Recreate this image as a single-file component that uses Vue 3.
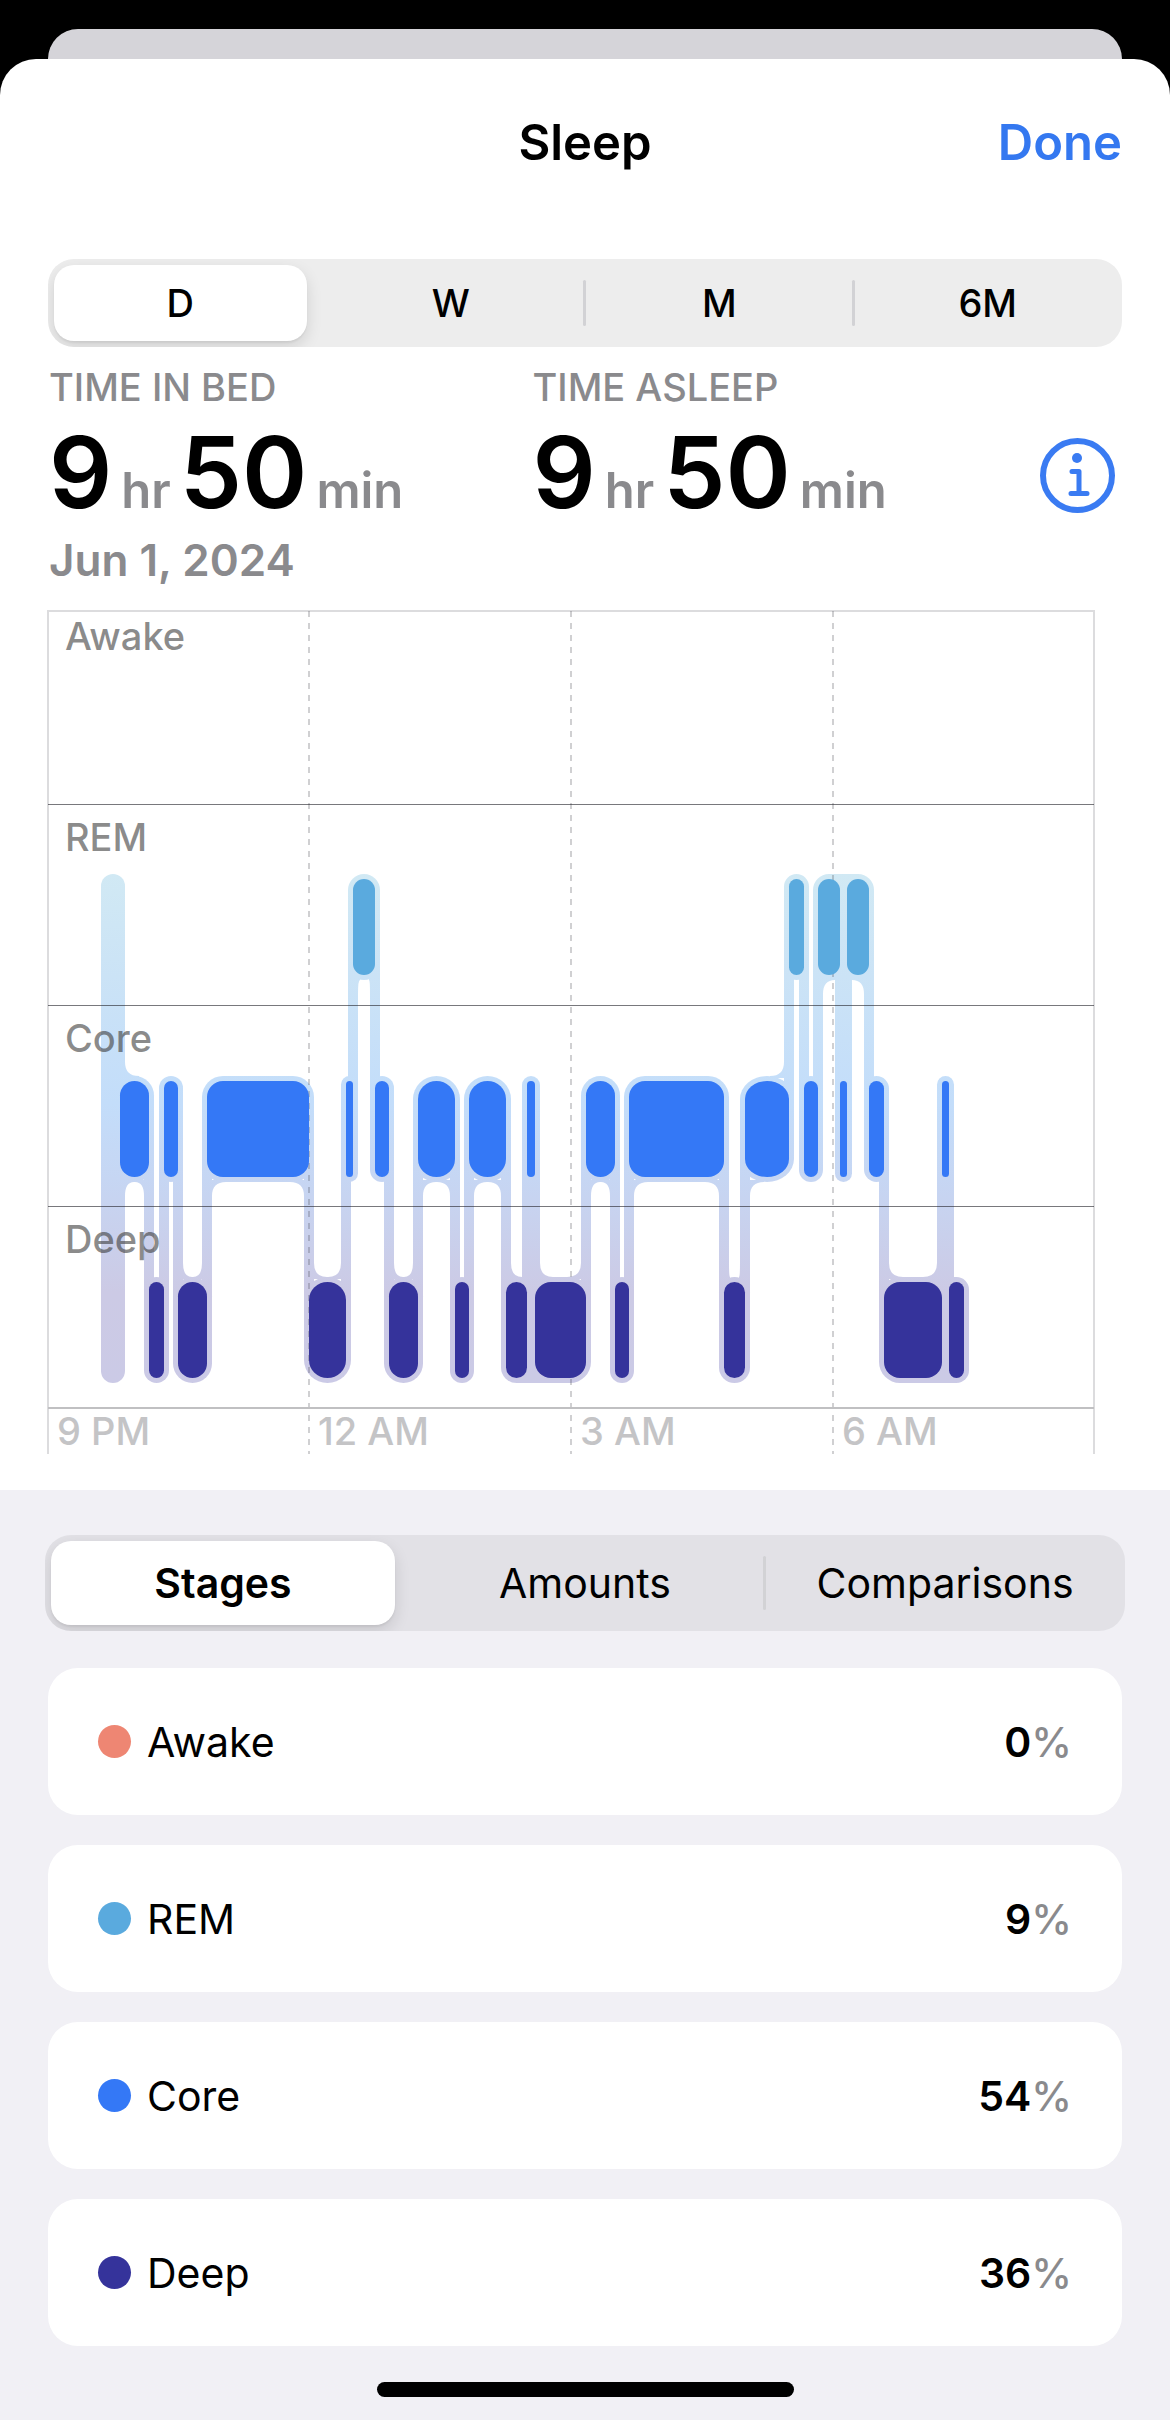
<script setup>
import { ref } from 'vue'

const ranges = ['D', 'W', 'M', '6M']
const activeRange = ref('D')

const views = ['Stages', 'Amounts', 'Comparisons']
const activeView = ref('Stages')

const totals = [
  { label: 'Time in Bed', hours: 9, minutes: 50 },
  { label: 'Time Asleep', hours: 9, minutes: 50 },
]

const shares = [
  { name: 'Awake', percent: 0 },
  { name: 'REM', percent: 9 },
  { name: 'Core', percent: 54 },
  { name: 'Deep', percent: 36 },
]

// Chart geometry, in viewBox units
const BAR = 96
const HALO = 5
const FILLET = 14
const barTop = { rem: 268, core: 470, deep: 671 }
const rows = [
  { name: 'Awake', y: 39 },
  { name: 'REM', y: 240 },
  { name: 'Core', y: 441 },
  { name: 'Deep', y: 642 },
]
const hours = [
  { name: '9 PM', x: 0 },
  { name: '12 AM', x: 261 },
  { name: '3 AM', x: 523 },
  { name: '6 AM', x: 785 },
]

// start, stage, left joint curve, right joint curve
const raw = [
  [72, 'core', 9, 9], [101, 'deep', 0, 0], [116, 'core', 0, 0], [130, 'deep', 9, 9],
  [159, 'core', 14, 14], [261, 'deep', 13, 13], [298, 'core', 0, 0], [305, 'rem', 2, 1],
  [327, 'core', 0, 0], [341, 'deep', 9, 9], [370, 'core', 13, 13], [407, 'deep', 0, 0],
  [421, 'core', 13, 13], [458, 'deep', 11, 0], [479, 'core', 0, 0], [487, 'deep', 13, 14],
  [538, 'core', 9, 9], [567, 'deep', 0, 0], [581, 'core', 14, 14], [676, 'deep', 1, 1],
  [697, 'core', 14, 14], [741, 'rem', 0, 0], [756, 'core', 0, 0], [770, 'rem', 12, 0],
  [792, 'core', 0, 0], [799, 'rem', 0, 12], [821, 'core', 0, 0], [836, 'deep', 14, 14],
  [894, 'core', 0, 0], [901, 'deep', 0, 0],
]
const END = 916

const bars = raw.map(([x, stage, left, right], i) => {
  const w = (i + 1 < raw.length ? raw[i + 1][0] : END) - x
  const rx = w <= 46 ? w / 2 : 16
  return { x, w, stage, left, right, y: barTop[stage], rx, ry: Math.min(rx, 18) }
})

const links = bars.slice(1).map((bar, i) => {
  const prev = bars[i]
  const top = Math.min(bar.y, prev.y) + BAR / 2
  return { x: bar.x - HALO, y: top, h: Math.abs(bar.y - prev.y) }
})

// A sliver between two bars of one stage joins their halos
const bridges = bars.flatMap((bar, i) => {
  const prev = bars[i - 1]
  const next = bars[i + 1]
  if (!prev || !next || prev.stage !== next.stage || bar.w > 8 || bar.stage === prev.stage) return []
  if (prev.stage === 'core') return []
  const x = prev.x + prev.w / 2
  return [{ x, y: prev.y - HALO, w: next.x + next.w / 2 - x }]
})

function curve(x, edge, width, dirX, dirY) {
  return `M${x - dirX} ${edge + dirY * FILLET}H${x}Q${x} ${edge} ${x + dirX * width} ${edge}V${edge - dirY * 2}H${x - dirX}Z`
}

const curves = bars.flatMap((bar, i) => {
  const out = []
  const prev = bars[i - 1]
  const next = bars[i + 1]
  const edgeOf = (dir) => (dir > 0 ? bar.y + BAR + HALO : bar.y - HALO)
  if (prev && bar.left) {
    const dir = Math.sign(prev.y - bar.y)
    out.push(curve(bar.x + HALO, edgeOf(dir), bar.left, 1, dir))
  }
  if (next && bar.right) {
    const dir = Math.sign(next.y - bar.y)
    out.push(curve(bar.x + bar.w - HALO, edgeOf(dir), bar.right, -1, dir))
  }
  return out
})
curves.push(curve(77, 465, 14, 1, -1), curve(77, 571, 9, 1, 1))
</script>

<template>
  <div class="screen">
    <div class="behind"></div>
    <main class="sheet">
      <header class="bar">
        <h1>Sleep</h1>
        <button class="done" type="button">Done</button>
      </header>

      <nav class="segments ranges" aria-label="Range">
        <button
          v-for="r in ranges"
          :key="r"
          type="button"
          :class="{ active: r === activeRange }"
          :aria-pressed="r === activeRange"
          @click="activeRange = r"
        >{{ r }}</button>
      </nav>

      <section class="totals">
        <div v-for="t in totals" :key="t.label">
          <h2>{{ t.label }}</h2>
          <p class="duration">
            <b>{{ t.hours }}</b><span>hr</span><b>{{ t.minutes }}</b><span>min</span>
          </p>
        </div>
        <button class="info" type="button" aria-label="About sleep data">
          <svg viewBox="0 0 75 75" fill="none" stroke="currentColor" stroke-linecap="round" stroke-linejoin="round">
            <circle cx="37.500" cy="37.500" r="34.500" stroke-width="6" />
            <circle cx="37" cy="20" r="5" fill="currentColor" stroke="none" />
            <path d="M32 33.500H39V55.500M31 55.500H47" stroke-width="5" />
          </svg>
        </button>
      </section>
      <p class="date">Jun 1, 2024</p>

      <svg class="chart" viewBox="-1 -1 1048 846" role="img" aria-label="Sleep stages by hour">
        <defs>
          <linearGradient id="halo" gradientUnits="userSpaceOnUse" x1="0" y1="263" x2="0" y2="772">
            <stop offset="0" stop-color="#d1e9f4" />
            <stop offset="0.2" stop-color="#cbe3f6" />
            <stop offset="0.45" stop-color="#c3ddfa" />
            <stop offset="0.6" stop-color="#c6d6f3" />
            <stop offset="0.82" stop-color="#cccae5" />
            <stop offset="1" stop-color="#cbcae6" />
          </linearGradient>
        </defs>
        <g fill="url(#halo)">
          <rect x="53" y="263" width="24" height="509" rx="12" />
          <rect x="65" y="465" width="22" height="106" />
          <rect
            v-for="b in bars" :key="b.x"
            :x="b.x - HALO" :y="b.y - HALO" :width="b.w + 2 * HALO" :height="BAR + 2 * HALO"
            :rx="b.rx + HALO" :ry="b.ry + HALO"
          />
          <rect v-for="l in links" :key="l.x" :x="l.x" :y="l.y" :width="2 * HALO" :height="l.h" />
          <rect v-for="g in bridges" :key="g.x" :x="g.x" :y="g.y" :width="g.w" :height="BAR + 2 * HALO" />
          <path v-for="(d, i) in curves" :key="i" :d="d" />
        </g>
        <path class="frame" d="M0 843V0H1046V843" />
        <path class="ticks" d="M261 0V843M523 0V843M785 0V843" />
        <path class="rule" d="M0 193.500H1046M0 394.500H1046M0 595.500H1046" />
        <path class="base" d="M0 797H1046" />
        <rect
          v-for="b in bars" :key="b.x" :class="b.stage"
          :x="b.x" :y="b.y" :width="b.w" :height="BAR" :rx="b.rx" :ry="b.ry"
        />
        <text v-for="r in rows" :key="r.name" class="stage" x="17" :y="r.y">{{ r.name }}</text>
        <text v-for="h in hours" :key="h.name" class="hour" :x="h.x + 9" y="834">{{ h.name }}</text>
      </svg>
    </main>

    <section class="details">
      <nav class="segments views" aria-label="View">
        <button
          v-for="v in views"
          :key="v"
          type="button"
          :class="{ active: v === activeView }"
          :aria-pressed="v === activeView"
          @click="activeView = v"
        >{{ v }}</button>
      </nav>
      <ul>
        <li v-for="s in shares" :key="s.name">
          <i :class="['dot', s.name.toLowerCase()]"></i>
          <span class="name">{{ s.name }}</span>
          <b>{{ s.percent }}</b><span class="unit">%</span>
        </li>
      </ul>
      <div class="home"></div>
    </section>
  </div>
</template>

<style>
body {
  margin: 0;
  background: #f1f0f5;
}
</style>

<style scoped>
.screen {
  background: #000;
  color: #000;
  font-family: Inter, "Liberation Sans", sans-serif;
  padding-top: 29px;
}
h1, h2, p, ul {
  margin: 0;
  padding: 0;
  font-weight: inherit;
}
button {
  border: 0;
  padding: 0;
  background: none;
  color: inherit;
  font: inherit;
  cursor: pointer;
}
.behind {
  height: 30px;
  margin: 0 48px;
  border-radius: 30px 30px 0 0;
  background: #d5d4d9;
}
.sheet {
  display: flow-root;
  background: #fff;
  border-radius: 36px 36px 0 0;
  padding-bottom: 34px;
}
.bar {
  display: grid;
  grid-template-columns: 1fr auto 1fr;
  margin: 54px 48px 86px;
  font-size: 49px;
  line-height: 60px;
  font-weight: 600;
}
.bar h1 {
  grid-column: 2;
  font-size: inherit;
}
.done {
  justify-self: end;
  color: #3478f0;
}
.segments {
  display: grid;
  grid-auto-flow: column;
  grid-auto-columns: minmax(0, 1fr);
  padding: 6px 0;
  border-radius: 26px;
  overflow: hidden;
}
.segments button {
  position: relative;
}
.segments button:not(.active) + button::before {
  content: "";
  position: absolute;
  left: -2px;
  top: 15px;
  bottom: 15px;
  width: 3px;
  border-radius: 2px;
  background: #d2d2d5;
}
.segments .active {
  margin: 0 10px 0 6px;
  border-radius: 20px;
  background: #fff;
  box-shadow: 0 6px 16px rgba(0, 0, 0, 0.12), 0 2px 2px rgba(0, 0, 0, 0.05);
}
.ranges {
  margin: 0 48px;
  height: 76px;
  background: #ededed;
  font-size: 38px;
  font-weight: 500;
}
.totals {
  display: grid;
  grid-template-columns: 483fr 507fr 75px;
  margin: 16px 55px 0 49px;
  color: #8a8a8d;
  font-weight: 600;
}
.totals h2 {
  font-size: 38px;
  line-height: 48px;
  font-weight: 500;
  text-transform: uppercase;
}
.duration {
  display: flex;
  align-items: baseline;
  gap: 9px;
  margin-top: 11px;
  line-height: 60px;
  font-size: 49px;
}
.duration b {
  color: #000;
  font-size: 99px;
  line-height: 100px;
  font-weight: 600;
}
.info {
  align-self: end;
  height: 75px;
  margin-bottom: 9px;
  color: #3a7bf2;
}
.info svg {
  display: block;
}
.date {
  margin: 11px 49px 0;
  color: #8a8a8d;
  font-size: 44px;
  line-height: 54px;
  font-weight: 600;
}
.chart {
  display: block;
  margin: 23px 75px 0 47px;
}
.rem { fill: #5aaade; background: #5aaade; }
.core { fill: #3478f6; background: #3478f6; }
.deep { fill: #35339b; background: #35339b; }
.awake { background: #ee8673; }
.frame, .ticks, .rule, .base {
  fill: none;
  stroke-width: 2;
}
.frame { stroke: #dcdcde; }
.ticks {
  stroke: rgba(60, 60, 67, 0.24);
  stroke-dasharray: 6 6;
}
.rule {
  stroke: rgba(30, 30, 36, 0.6);
  stroke-width: 1;
}
.base { stroke: #c0c0c2; }
.stage, .hour {
  font-size: 38px;
  font-weight: 500;
}
.stage { fill: rgba(60, 60, 60, 0.6); }
.hour { fill: #c4c4c6; }
.details {
  background: #f1f0f5;
  padding: 45px 48px 24px;
}
.views {
  margin: 0 -3px 37px;
  height: 84px;
  background: #e2e1e6;
  font-size: 41px;
}
.views .active {
  font-weight: 600;
}
ul {
  display: grid;
  gap: 30px;
  list-style: none;
}
li {
  display: flex;
  align-items: center;
  height: 147px;
  padding: 0 50px;
  border-radius: 30px;
  background: #fff;
  font-size: 41px;
}
.dot {
  width: 33px;
  height: 33px;
  margin-right: 16px;
  border-radius: 50%;
}
.name {
  flex: 1;
}
li b {
  font-weight: 600;
}
.unit {
  color: #8a8a8d;
  font-weight: 500;
}
.home {
  width: 417px;
  height: 15px;
  margin: 36px auto 0;
  border-radius: 8px;
  background: #000;
}
</style>
